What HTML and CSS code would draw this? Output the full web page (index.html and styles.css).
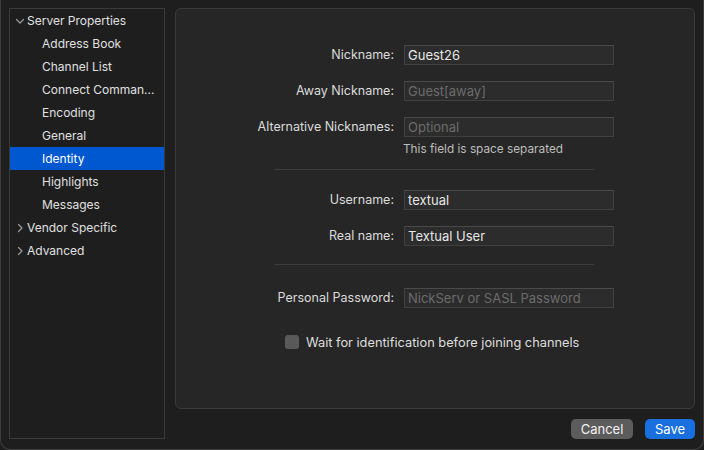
FILE: index.html
```html
<!DOCTYPE html>
<html>
<head>
<meta charset="utf-8">
<link rel="stylesheet" href="styles.css">
</head>
<body>
<div class="window">
  <div class="sidebar">
    <div class="item parent"><svg class="chev" width="10" height="10" viewBox="0 0 10 10"><path d="M1.5 3.5 L5 7 L8.5 3.5" fill="none" stroke="#9a9a9a" stroke-width="1.2" stroke-linecap="round" stroke-linejoin="round"/></svg>Server Properties</div>
    <div class="item child">Address Book</div>
    <div class="item child">Channel List</div>
    <div class="item child">Connect Comman...</div>
    <div class="item child">Encoding</div>
    <div class="item child">General</div>
    <div class="item child selected">Identity</div>
    <div class="item child">Highlights</div>
    <div class="item child">Messages</div>
    <div class="item parent"><svg class="chev" width="10" height="10" viewBox="0 0 10 10"><path d="M3.5 1.5 L7 5 L3.5 8.5" fill="none" stroke="#9a9a9a" stroke-width="1.2" stroke-linecap="round" stroke-linejoin="round"/></svg>Vendor Specific</div>
    <div class="item parent"><svg class="chev" width="10" height="10" viewBox="0 0 10 10"><path d="M3.5 1.5 L7 5 L3.5 8.5" fill="none" stroke="#9a9a9a" stroke-width="1.2" stroke-linecap="round" stroke-linejoin="round"/></svg>Advanced</div>
  </div>
  <div class="right">
    <div class="panel">
      <div class="row r1"><label>Nickname:</label><div class="field">Guest26</div></div>
      <div class="row r2"><label>Away Nickname:</label><div class="field ph">Guest[away]</div></div>
      <div class="row r3"><label>Alternative Nicknames:</label><div class="field ph">Optional</div></div>
      <div class="hint">This field is space separated</div>
      <div class="sep s1"></div>
      <div class="row r4"><label>Username:</label><div class="field">textual</div></div>
      <div class="row r5"><label>Real name:</label><div class="field">Textual User</div></div>
      <div class="sep s2"></div>
      <div class="row r6"><label>Personal Password:</label><div class="field ph">NickServ or SASL Password</div></div>
      <div class="check"><span class="box"></span><span>Wait for identification before joining channels</span></div>
    </div>
    <div class="footer">
      <div class="btn cancel">Cancel</div>
      <div class="btn save">Save</div>
    </div>
  </div>
</div>
</body>
</html>
```
FILE: styles.css
```css
* { box-sizing: border-box; }
html, body { margin: 0; padding: 0; background: #1e1e1e; }
body { width: 704px; height: 450px; overflow: hidden; font-family: "Inter", "Liberation Sans", sans-serif; font-size: 12.5px; color: #dedede; }
.window {
  width: 704px; height: 450px;
  background: #1e1e1e;
  border: 1px solid #3e3e3e; border-top: none;
  border-radius: 0 0 10px 10px;
  padding: 8px 8px 0 8px;
  display: flex; gap: 10px;
}
.sidebar {
  width: 156px; height: 431px;
  border: 1px solid #3a3a3a;
  display: flex; flex-direction: column;
}
.item { height: 23px; line-height: 23px; white-space: nowrap; color: #e0e0e0; display: flex; align-items: center; font-size: 12px; }
.item.parent { padding-left: 5px; }
.item.child { padding-left: 32px; }
.chev { margin-right: 2px; flex: none; }
.item.selected { background: #0058d0; color: #ffffff; }
.right { width: 520px; display: flex; flex-direction: column; }
.panel {
  width: 520px; height: 401px;
  background: #262626;
  border: 1px solid #3a3a3a;
  border-radius: 6px;
  padding-top: 35px;
  display: flex; flex-direction: column;
}
.row { display: flex; align-items: center; height: 20px; padding-top: 1px; }
.row label { width: 218px; text-align: right; color: #dcdcdc; }
.field {
  margin-left: 10px; width: 210px; height: 20px; line-height: 19px;
  background: #2c2c2c; border: 1px solid #404040; border-top-color: #4a4a4a;
  padding-left: 3px; color: #e6e6e6; font-size: 13px;
}
.field.ph { color: #6b6b6b; }
.r2, .r3, .r5 { margin-top: 16px; }
.hint { margin-top: 5px; margin-left: 227px; height: 16px; line-height: 17px; font-size: 11.8px; color: #bdbdbd; }
.sep { height: 1px; background: #3c3c3c; width: 320px; margin-left: 98px; }
.s1 { margin-top: 12px; }
.r4 { margin-top: 19px; }
.s2 { margin-top: 19px; }
.r6 { margin-top: 22px; }
.check { margin-top: 27px; margin-left: 109px; display: flex; align-items: center; gap: 7px; height: 16px; color: #dedede; font-size: 12.8px; }
.box { width: 14px; height: 14px; border-radius: 3px; background: #595959; display: inline-block; flex: none; }
.footer { display: flex; justify-content: flex-end; gap: 12px; margin-top: 10px; }
.btn { height: 20px; line-height: 20px; border-radius: 5px; text-align: center; color: #f2f2f2; font-size: 13px; }
.cancel { width: 62px; background: #5c5c5c; }
.save { width: 50px; background: #1a6fdf; color: #ffffff; }
```
